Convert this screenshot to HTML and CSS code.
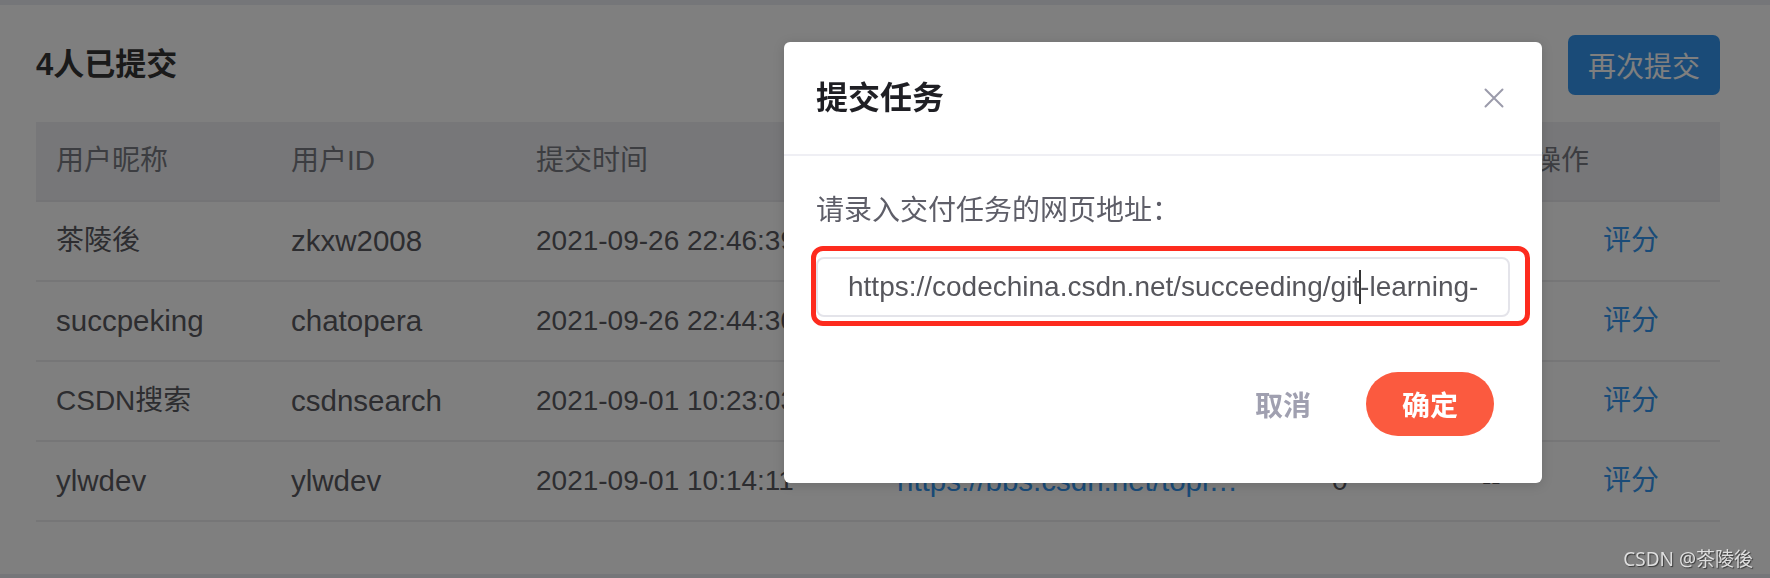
FILE: index.html
```html
<!DOCTYPE html>
<html lang="zh-CN">
<head>
<meta charset="utf-8">
<title>提交任务</title>
<link rel="stylesheet" href="styles.css">
</head>
<body>
<div class="page">
  <div class="topbar"></div>
  <main class="content">
    <div class="title-row">
      <h2 class="title">4人已提交</h2>
      <button class="btn-primary">再次提交</button>
    </div>
    <div class="table">
      <div class="row head">
        <div class="cell">用户昵称</div>
        <div class="cell">用户ID</div>
        <div class="cell">提交时间</div>
        <div class="cell">提交链接</div>
        <div class="cell">得分</div>
        <div class="cell"></div>
        <div class="cell">操作</div>
      </div>
      <div class="row">
        <div class="cell">茶陵後</div>
        <div class="cell"><span class="en">zkxw2008</span></div>
        <div class="cell">2021-09-26 22:46:39</div>
        <div class="cell"><span class="link">https://codechina.csdn.net/succeeding</span></div>
        <div class="cell">0</div>
        <div class="cell">--</div>
        <div class="cell"><span class="action">评分</span></div>
      </div>
      <div class="row">
        <div class="cell"><span class="en">succpeking</span></div>
        <div class="cell"><span class="en">chatopera</span></div>
        <div class="cell">2021-09-26 22:44:30</div>
        <div class="cell"><span class="link">https://bbs.csdn.net/topics/601234567</span></div>
        <div class="cell">0</div>
        <div class="cell">--</div>
        <div class="cell"><span class="action">评分</span></div>
      </div>
      <div class="row">
        <div class="cell">CSDN搜索</div>
        <div class="cell"><span class="en">csdnsearch</span></div>
        <div class="cell">2021-09-01 10:23:03</div>
        <div class="cell"><span class="link">https://bbs.csdn.net/topics/600912345</span></div>
        <div class="cell">0</div>
        <div class="cell">--</div>
        <div class="cell"><span class="action">评分</span></div>
      </div>
      <div class="row">
        <div class="cell"><span class="en">ylwdev</span></div>
        <div class="cell"><span class="en">ylwdev</span></div>
        <div class="cell">2021-09-01 10:14:11</div>
        <div class="cell"><span class="link">https://bbs.csdn.net/topics/600911111</span></div>
        <div class="cell">0</div>
        <div class="cell">--</div>
        <div class="cell"><span class="action">评分</span></div>
      </div>
    </div>
  </main>
  <div class="bottombar"></div>
</div>

<div class="mask"></div>

<div class="dialog">
  <div class="dialog-header">
    <h3 class="dialog-title">提交任务</h3>
    <svg class="close" width="20" height="20" viewBox="0 0 20 20"><path d="M1.5 1.5 L18.5 18.5 M18.5 1.5 L1.5 18.5" stroke="#9b9bab" stroke-width="2" fill="none" stroke-linecap="round"/></svg>
  </div>
  <div class="dialog-body">
    <div class="label">请录入交付任务的网页地址：</div>
    <div class="input-wrap">
      <div class="input">https://codechina.csdn.net/succeeding/git<span class="caret"></span>-learning-</div>
      <div class="annot"></div>
    </div>
  </div>
  <div class="dialog-footer">
    <button class="btn-cancel">取消</button>
    <button class="btn-ok">确定</button>
  </div>
</div>

<div class="watermark">CSDN @茶陵後</div>
</body>
</html>
```
FILE: styles.css
```css
* { box-sizing: border-box; }
html, body {
  margin: 0;
  padding: 0;
  width: 1770px;
  height: 578px;
  overflow: hidden;
  background: #fff;
  font-family: "Liberation Sans", "Noto Sans CJK SC", sans-serif;
}
.page {
  display: flex;
  flex-direction: column;
  height: 578px;
}
.topbar {
  height: 5px;
  background: #eaecf3;
  flex: none;
}
.bottombar {
  height: 4px;
  background: #eaecf3;
  margin-top: auto;
  flex: none;
}
.content {
  padding: 0 50px 0 36px;
}
.title-row {
  margin-top: 30px;
  height: 60px;
  display: flex;
  align-items: center;
  justify-content: space-between;
}
.title {
  margin: 0;
  font-size: 31px;
  line-height: 40px;
  font-weight: 700;
  color: #353535;
}
.btn-primary {
  width: 152px;
  height: 60px;
  border: none;
  border-radius: 7px;
  background: #3597f0;
  color: #fff;
  font-family: inherit;
  font-size: 28px;
  padding: 0;
}
.table {
  margin-top: 27px;
}
.row {
  display: grid;
  grid-template-columns: 235px 245px 361px 435px 150px 51px 1fr;
  height: 80px;
  border-bottom: 2px solid #ededef;
  align-items: center;
  font-size: 28px;
  line-height: 36px;
  color: #5a5a61;
}
.row.head {
  background: #eeeff2;
  color: #797b82;
  border-bottom: 2px solid #e8e9ec;
}
.cell {
  padding-left: 20px;
  white-space: nowrap;
}
.en {
  font-size: 29.5px;
}
.link {
  display: block;
  max-width: 350px;
  overflow: hidden;
  text-overflow: ellipsis;
  font-size: 29.5px;
  color: #3597f0;
}
.action {
  color: #3597f0;
  margin-left: 70px;
}
.mask {
  position: fixed;
  inset: 0;
  background: rgba(0, 0, 0, 0.5);
}
.dialog {
  position: absolute;
  left: 784px;
  top: 42px;
  width: 758px;
  background: #fff;
  border-radius: 6px;
  box-shadow: 0 2px 12px rgba(0, 0, 0, 0.15);
}
.dialog-header {
  height: 114px;
  padding: 0 38px 0 32px;
  display: flex;
  align-items: center;
  justify-content: space-between;
  border-bottom: 2px solid #efeff4;
}
.dialog-title {
  margin: 0;
  font-size: 32px;
  line-height: 40px;
  font-weight: 700;
  color: #1f1f24;
}
.dialog-body {
  padding: 35px 32px 0;
}
.label {
  font-size: 28px;
  line-height: 40px;
  color: #5e5e68;
}
.input-wrap {
  position: relative;
  margin-top: 26px;
}
.input {
  height: 60px;
  border: 2px solid #e4e4ea;
  border-radius: 8px;
  padding-left: 30px;
  display: flex;
  align-items: center;
  font-size: 28px;
  color: #56565c;
  white-space: nowrap;
}
.caret {
  display: inline-block;
  width: 2px;
  height: 34px;
  background: #333;
  margin: 0 -1px;
}
.annot {
  position: absolute;
  left: -5px;
  top: -11px;
  right: -20px;
  bottom: -9px;
  border: 5px solid #fd2b1e;
  border-radius: 12px;
  pointer-events: none;
}
.dialog-footer {
  display: flex;
  justify-content: flex-end;
  align-items: center;
  gap: 55px;
  padding: 55px 48px 47px 32px;
}
.btn-cancel {
  border: none;
  background: none;
  padding: 0;
  font-family: inherit;
  font-size: 28px;
  font-weight: 700;
  color: #a0a0b0;
}
.btn-ok {
  width: 128px;
  height: 64px;
  border: none;
  border-radius: 32px;
  background: #fb5a3f;
  color: #fff;
  font-family: inherit;
  font-size: 28px;
  font-weight: 700;
  padding: 0;
}
.watermark {
  position: absolute;
  right: 17px;
  top: 547px;
  font-family: "Noto Sans", "Noto Sans CJK SC", sans-serif;
  font-size: 19px;
  line-height: 24px;
  color: #dedede;
  text-shadow: 1px 1px 1px rgba(40, 40, 40, 0.8);
}
```
